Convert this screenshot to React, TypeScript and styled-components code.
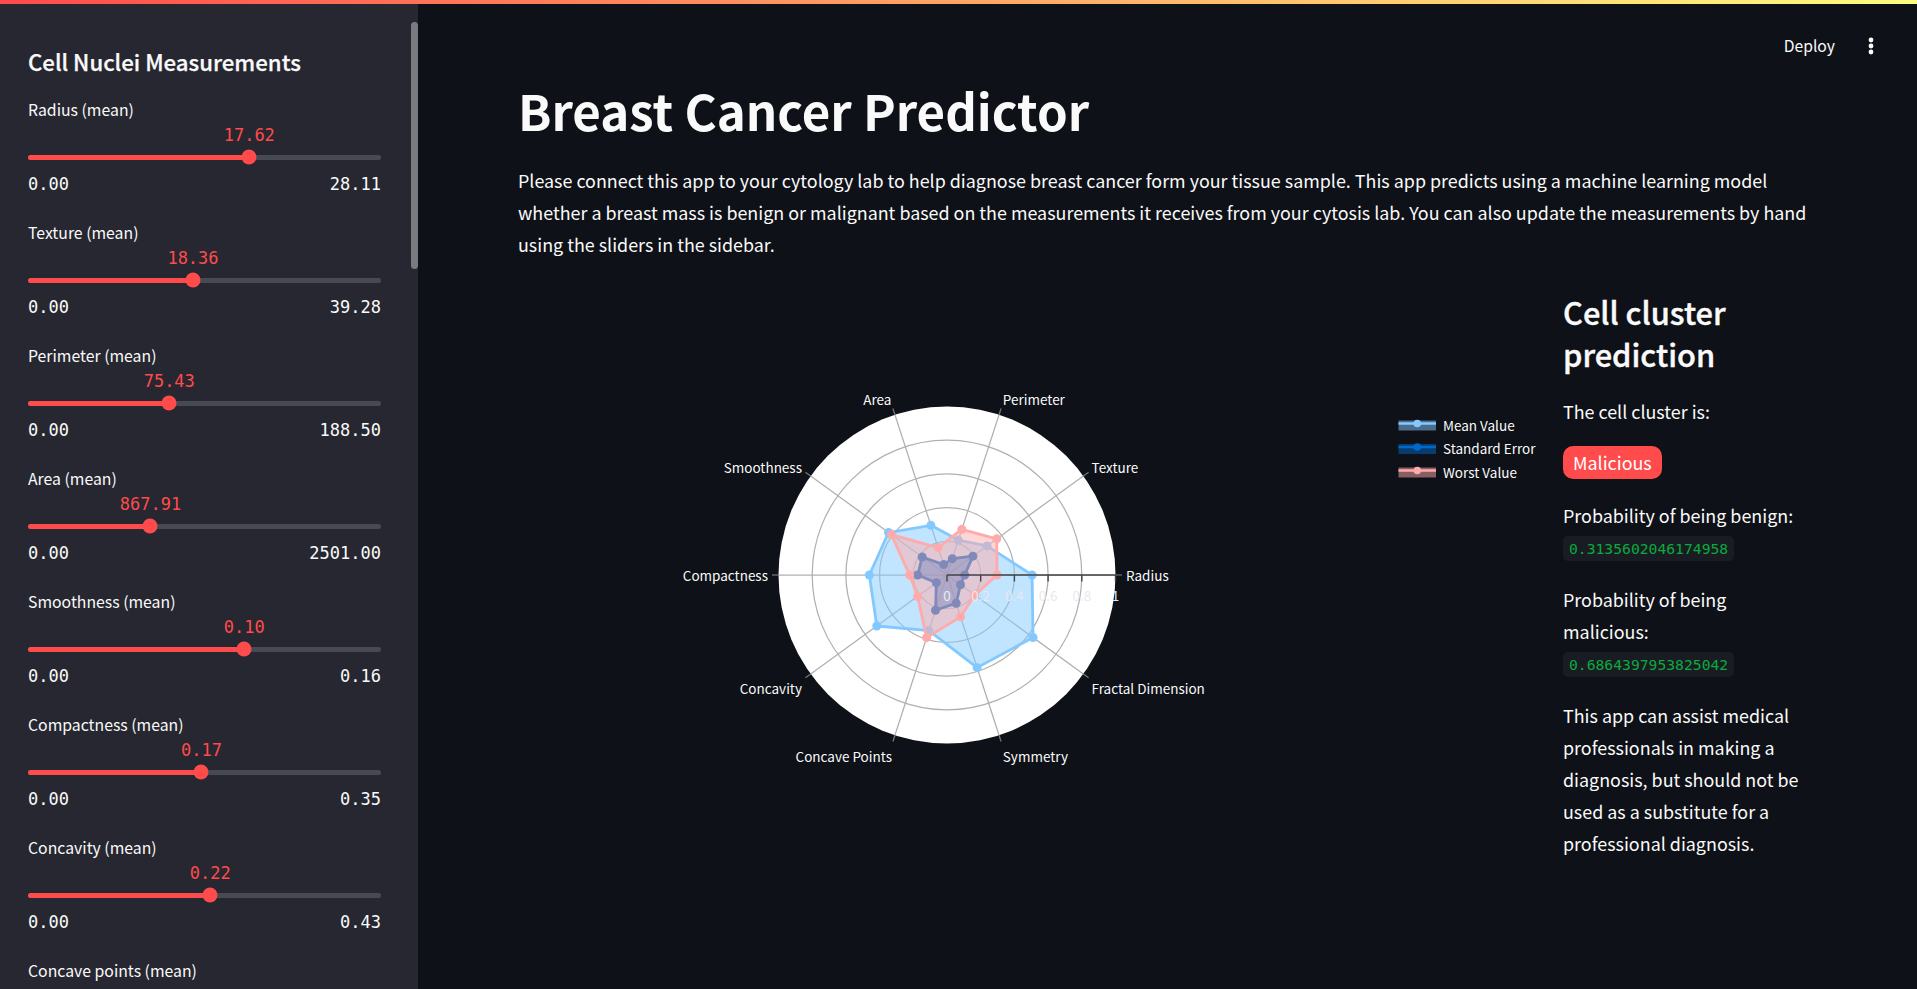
import React from 'react'
import styled, { createGlobalStyle } from 'styled-components'

const sans = `"Noto Sans CJK SC", "Noto Sans", sans-serif`
const mono = `"DejaVu Sans Mono", "Liberation Mono", monospace`

const GlobalStyle = createGlobalStyle`
	html, body {
		margin: 0;
		height: 100%;
		background: #0e1117;
		overflow: hidden;
	}
	* {
		box-sizing: border-box;
	}
`

const Page = styled.div`
	height: 989px;
	display: flex;
	flex-direction: column;
	font-family: ${sans};
	color: #fafafa;
	overflow: hidden;
`

const Decoration = styled.div`
	height: 4px;
	flex: none;
	background: linear-gradient(90deg, #ff4b4b, #fffd80);
`

const Body = styled.div`
	flex: 1;
	display: flex;
	min-height: 0;
`

const Sidebar = styled.aside`
	width: 418px;
	flex: none;
	background: #262730;
	padding: 42px 37px 0 28px;
	position: relative;
	overflow: hidden;
`

const ScrollThumb = styled.div`
	position: absolute;
	top: 18px;
	right: 0;
	width: 7px;
	height: 247px;
	border-radius: 4px;
	background: #7a7a80;
`

const SidebarTitle = styled.h2`
	margin: 0 0 23px;
	font-size: 22.2px;
	line-height: 30px;
	font-weight: 500;
	-webkit-text-stroke: 0.25px #fafafa;
`

const SliderBlock = styled.div`
	margin-bottom: 27px;
`

const SliderLabel = styled.div`
	font-size: 15.8px;
	line-height: 22px;
`

const TrackWrap = styled.div`
	position: relative;
	height: 5px;
	margin-top: 33.5px;
	border-radius: 3px;
	background: #484953;
`

const TrackFill = styled.div`
	height: 100%;
	border-radius: 3px;
	background: #ff4b4b;
`

const Thumb = styled.div`
	position: absolute;
	top: 50%;
	width: 15px;
	height: 15px;
	border-radius: 50%;
	background: #ff4b4b;
	transform: translate(-50%, -50%);
`

const ThumbValue = styled.div`
	position: absolute;
	bottom: 14px;
	transform: translateX(-50%);
	font-family: ${mono};
	font-size: 17px;
	line-height: 22px;
	color: #ff4b4b;
	white-space: nowrap;
`

const SliderEnds = styled.div`
	display: flex;
	justify-content: space-between;
	margin-top: 13.5px;
	font-family: ${mono};
	font-size: 17px;
	line-height: 22px;
`

const Main = styled.main`
	flex: 1;
	min-width: 0;
	padding: 0 107px 0 100px;
`

const Header = styled.header`
	height: 73px;
	margin-right: -107px;
	padding: 31px 41px 0 0;
	display: flex;
	justify-content: flex-end;
	align-items: flex-start;
	gap: 31px;
`

const DeployButton = styled.span`
	font-size: 15.7px;
	line-height: 22px;
`

const MenuIcon = styled.svg`
	width: 10px;
	height: 22px;
	display: block;
`

const Title = styled.h1`
	margin: 0 0 21px;
	font-size: 49.2px;
	line-height: 66px;
	font-weight: 700;
`

const Intro = styled.p`
	margin: 0 0 31px;
	font-size: 17.9px;
	line-height: 32px;
`

const Columns = styled.div`
	display: grid;
	grid-template-columns: 1fr 247px;
	column-gap: 20px;
`

const ChartSvg = styled.svg`
	width: 1025px;
	height: 562px;
	display: block;
`

const ClusterTitle = styled.h3`
	margin: 0 0 20px;
	font-size: 30.8px;
	line-height: 42px;
	font-weight: 500;
	-webkit-text-stroke: 0.4px #fafafa;
`

const ResultText = styled.p`
	margin: 0 0 5px;
	font-size: 17.9px;
	line-height: 32px;
`

const ResultBlock = styled.div`
	margin-bottom: 22px;
`

const Pill = styled.div`
	width: fit-content;
	height: 33px;
	margin: 19px 0 20px;
	padding: 0 10px;
	border-radius: 10px;
	background: #ff4b4b;
	font-size: 17.9px;
	line-height: 33px;
	color: #fff;
`

const Code = styled.code`
	display: block;
	width: fit-content;
	height: 25px;
	padding: 0 6px;
	border-radius: 5px;
	background: #1a1c24;
	font-family: ${mono};
	font-size: 14.7px;
	line-height: 25px;
	color: #09ab3b;
`

type SliderSpec = { label: string; value?: number; max?: number }

const sliders: SliderSpec[] = [
	{ label: 'Radius (mean)', value: 17.62, max: 28.11 },
	{ label: 'Texture (mean)', value: 18.36, max: 39.28 },
	{ label: 'Perimeter (mean)', value: 75.43, max: 188.5 },
	{ label: 'Area (mean)', value: 867.91, max: 2501 },
	{ label: 'Smoothness (mean)', value: 0.098, max: 0.16 },
	{ label: 'Compactness (mean)', value: 0.172, max: 0.35 },
	{ label: 'Concavity (mean)', value: 0.222, max: 0.43 },
	{ label: 'Concave points (mean)' },
]

const CX = 429
const CY = 284
const R = 168.5

const axes = [
	{ name: 'Radius', x: 179, y: 0, anchor: 'start' },
	{ name: 'Texture', x: 144.6, y: -108, anchor: 'start' },
	{ name: 'Perimeter', x: 55.8, y: -176, anchor: 'start' },
	{ name: 'Area', x: -55.6, y: -176, anchor: 'end' },
	{ name: 'Smoothness', x: -145, y: -108, anchor: 'end' },
	{ name: 'Compactness', x: -179, y: 0, anchor: 'end' },
	{ name: 'Concavity', x: -145, y: 113, anchor: 'end' },
	{ name: 'Concave Points', x: -55, y: 181, anchor: 'end' },
	{ name: 'Symmetry', x: 55.8, y: 181, anchor: 'start' },
	{ name: 'Fractal Dimension', x: 144.6, y: 113, anchor: 'start' },
]

const traces = [
	{ name: 'Mean Value', color: '#83c9ff', values: [0.505, 0.294, 0.218, 0.31, 0.429, 0.461, 0.515, 0.347, 0.578, 0.631] },
	{ name: 'Standard Error', color: '#0068c9', values: [0.105, 0.19, 0.102, 0.065, 0.182, 0.174, 0.078, 0.22, 0.176, 0.099] },
	{ name: 'Worst Value', color: '#ffabab', values: [0.297, 0.365, 0.285, 0.171, 0.408, 0.222, 0.216, 0.391, 0.261, 0.203] },
]

const polar = (value: number, index: number, radius = R) => {
	const a = (index * 36 * Math.PI) / 180
	return [CX + value * radius * Math.cos(a), CY - value * radius * Math.sin(a)]
}

const RadarChart = () => (
	<ChartSvg viewBox="0 0 1025 562" fontFamily={sans} fontSize="13.5" fill="#fafafa">
		<circle cx={CX} cy={CY} r={R} fill="#fff" />
		{[0.2, 0.4, 0.6, 0.8].map(t => (
			<circle key={t} cx={CX} cy={CY} r={t * R} fill="none" stroke="#b0b0b0" strokeWidth="1.25" />
		))}
		{axes.map((axis, i) => {
			const [x, y] = polar(1, i)
			const [tx, ty] = polar(1, i, R + 6.5)
			return (
				<g key={axis.name}>
					<line x1={CX} y1={CY} x2={x} y2={y} stroke="#b0b0b0" strokeWidth="1.25" />
					<line x1={x} y1={y} x2={tx} y2={ty} stroke="#777" strokeWidth="1.25" />
					<text x={CX + axis.x} y={CY + axis.y - 0.5} textAnchor={axis.anchor} dominantBaseline="central">{axis.name}</text>
				</g>
			)
		})}
		{traces.map(trace => {
			const points = trace.values.map((v, i) => polar(v, i))
			const list = points.map(p => p.join(',')).join(' ')
			return (
				<g key={trace.name}>
					<polygon points={list} fill={trace.color} fillOpacity="0.5" />
					<polygon points={list} fill="none" stroke={trace.color} strokeWidth="2.8" strokeLinejoin="round" />
					{points.map((p, i) => (
						<circle key={i} cx={p[0]} cy={p[1]} r="4.5" fill={trace.color} />
					))}
				</g>
			)
		})}
		<line x1={CX} y1={CY} x2={CX + R + 6.5} y2={CY} stroke="#444" strokeWidth="1.4" />
		{[0, 0.2, 0.4, 0.6, 0.8, 1].map(t => (
			<g key={t}>
				<line x1={CX + t * R} y1={CY} x2={CX + t * R} y2={CY + 6.5} stroke="#444" strokeWidth="1.4" />
				<text x={CX + t * R} y={CY + 20} textAnchor="middle" dominantBaseline="central" fill="#e6eaf1">{t}</text>
			</g>
		))}
		{traces.map((trace, i) => {
			const top = 129.5 + i * 23.5
			return (
				<g key={trace.name}>
					<rect x="880.5" y={top} width="37.5" height="10" fill={trace.color} fillOpacity="0.5" />
					<line x1="880.5" y1={top + 3} x2="918" y2={top + 3} stroke={trace.color} strokeWidth="2.5" />
					<circle cx="899.3" cy={top + 3} r="3.8" fill={trace.color} />
					<text x="925" y={top + 4} dominantBaseline="central">{trace.name}</text>
				</g>
			)
		})}
	</ChartSvg>
)

export default function App() {
	return (
		<Page>
			<GlobalStyle />
			<Decoration />
			<Body>
				<Sidebar>
					<ScrollThumb />
					<SidebarTitle>Cell Nuclei Measurements</SidebarTitle>
					{sliders.map(s => {
						if (s.value === undefined || s.max === undefined) {
							return <SliderLabel key={s.label}>{s.label}</SliderLabel>
						}
						const pct = (s.value / s.max) * 100
						return (
							<SliderBlock key={s.label}>
								<SliderLabel>{s.label}</SliderLabel>
								<TrackWrap>
									<TrackFill style={{ width: `${pct}%` }} />
									<Thumb style={{ left: `${pct}%` }} />
									<ThumbValue style={{ left: `${pct}%` }}>{s.value.toFixed(2)}</ThumbValue>
								</TrackWrap>
								<SliderEnds>
									<span>0.00</span>
									<span>{s.max.toFixed(2)}</span>
								</SliderEnds>
							</SliderBlock>
						)
					})}
				</Sidebar>
				<Main>
					<Header>
						<DeployButton>Deploy</DeployButton>
						<MenuIcon viewBox="0 0 10 22">
							<circle cx="5" cy="5" r="2.4" fill="#fafafa" />
							<circle cx="5" cy="11" r="2.4" fill="#fafafa" />
							<circle cx="5" cy="17" r="2.4" fill="#fafafa" />
						</MenuIcon>
					</Header>
					<Title>Breast Cancer Predictor</Title>
					<Intro>
						Please connect this app to your cytology lab to help diagnose breast cancer form your tissue sample. This app predicts using a machine learning model whether a breast mass is benign or malignant based on the measurements it receives from your cytosis lab. You can also update the measurements by hand using the sliders in the sidebar.
					</Intro>
					<Columns>
						<RadarChart />
						<div>
							<ClusterTitle>Cell cluster prediction</ClusterTitle>
							<ResultText>The cell cluster is:</ResultText>
							<Pill>Malicious</Pill>
							<ResultBlock>
								<ResultText>Probability of being benign:</ResultText>
								<Code>0.3135602046174958</Code>
							</ResultBlock>
							<ResultBlock>
								<ResultText>Probability of being malicious:</ResultText>
								<Code>0.6864397953825042</Code>
							</ResultBlock>
							<ResultBlock>
								<ResultText>This app can assist medical professionals in making a diagnosis, but should not be used as a substitute for a professional diagnosis.</ResultText>
							</ResultBlock>
						</div>
					</Columns>
				</Main>
			</Body>
		</Page>
	)
}
